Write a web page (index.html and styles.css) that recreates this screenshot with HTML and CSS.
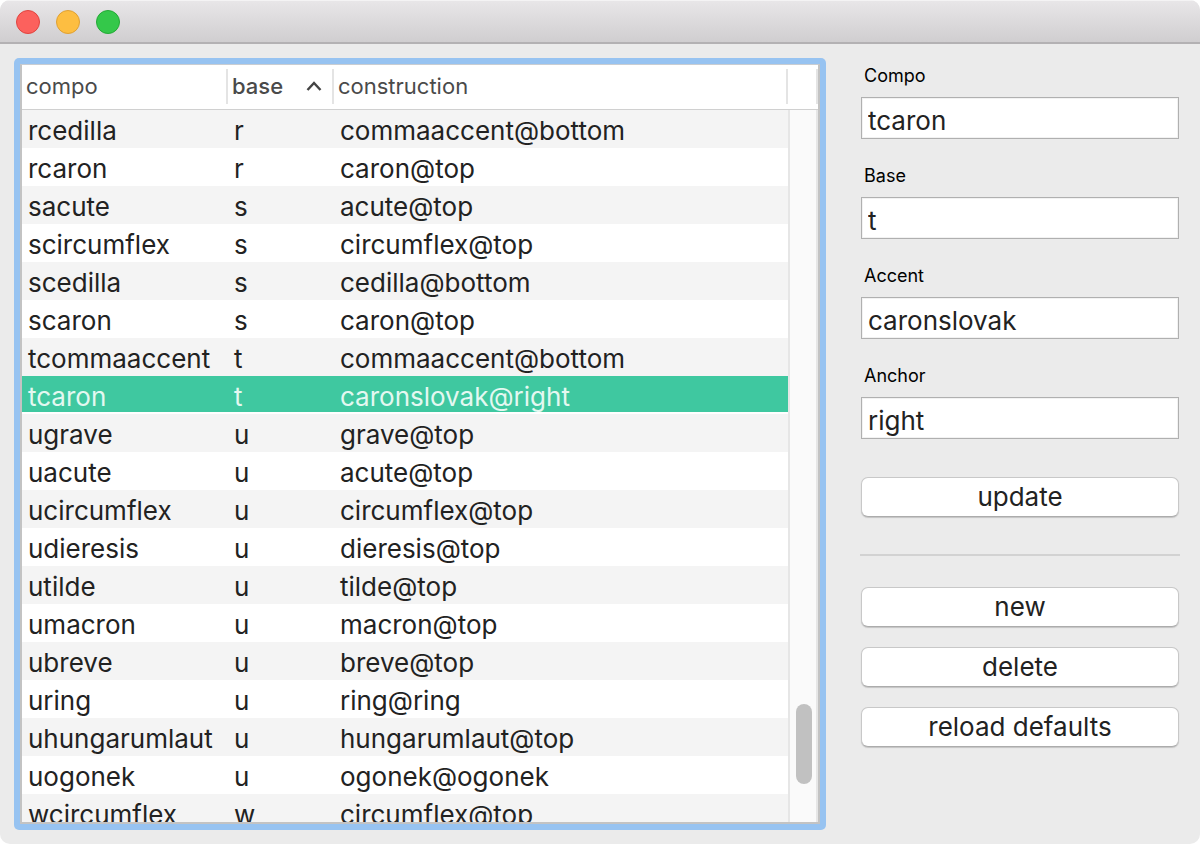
FILE: index.html
```html
<!DOCTYPE html>
<html lang="en">
<head>
<meta charset="utf-8">
<title>Glyph constructions</title>
<link rel="stylesheet" href="styles.css">
</head>
<body>
<div class="window">
  <header class="titlebar">
    <button class="light light-close" type="button" aria-label="Close"></button>
    <button class="light light-minimize" type="button" aria-label="Minimize"></button>
    <button class="light light-zoom" type="button" aria-label="Zoom"></button>
  </header>
  <main class="content">
    <section class="list">
      <div class="viewport">
      <table class="table">
        <colgroup><col class="col-compo"><col class="col-base"><col><col class="col-end"></colgroup>
        <thead>
          <tr>
            <th scope="col"><div class="head">compo</div></th>
            <th scope="col" aria-sort="ascending"><div class="head head-sorted">base
              <svg class="caret" viewBox="0 0 16 10" aria-hidden="true"><path d="M1.500 9L8 2L14.500 9"/></svg></div></th>
            <th scope="col"><div class="head">construction</div></th>
            <td><div class="head"></div></td>
          </tr>
        </thead>
        <tbody>
          <tr><td>rcedilla</td><td>r</td><td>commaaccent@bottom</td><td></td></tr>
          <tr><td>rcaron</td><td>r</td><td>caron@top</td><td></td></tr>
          <tr><td>sacute</td><td>s</td><td>acute@top</td><td></td></tr>
          <tr><td>scircumflex</td><td>s</td><td>circumflex@top</td><td></td></tr>
          <tr><td>scedilla</td><td>s</td><td>cedilla@bottom</td><td></td></tr>
          <tr><td>scaron</td><td>s</td><td>caron@top</td><td></td></tr>
          <tr><td>tcommaaccent</td><td>t</td><td>commaaccent@bottom</td><td></td></tr>
          <tr class="selected"><td>tcaron</td><td>t</td><td>caronslovak@right</td><td></td></tr>
          <tr><td>ugrave</td><td>u</td><td>grave@top</td><td></td></tr>
          <tr><td>uacute</td><td>u</td><td>acute@top</td><td></td></tr>
          <tr><td>ucircumflex</td><td>u</td><td>circumflex@top</td><td></td></tr>
          <tr><td>udieresis</td><td>u</td><td>dieresis@top</td><td></td></tr>
          <tr><td>utilde</td><td>u</td><td>tilde@top</td><td></td></tr>
          <tr><td>umacron</td><td>u</td><td>macron@top</td><td></td></tr>
          <tr><td>ubreve</td><td>u</td><td>breve@top</td><td></td></tr>
          <tr><td>uring</td><td>u</td><td>ring@ring</td><td></td></tr>
          <tr><td>uhungarumlaut</td><td>u</td><td>hungarumlaut@top</td><td></td></tr>
          <tr><td>uogonek</td><td>u</td><td>ogonek@ogonek</td><td></td></tr>
          <tr><td>wcircumflex</td><td>w</td><td>circumflex@top</td><td></td></tr>
        </tbody>
      </table>
      <div class="scrollbar"><div class="thumb"></div></div>
      </div>
    </section>
    <form class="panel">
      <label class="label" for="compo">Compo</label>
      <input class="field" id="compo" type="text" value="tcaron">
      <label class="label" for="base">Base</label>
      <input class="field" id="base" type="text" value="t">
      <label class="label" for="accent">Accent</label>
      <input class="field" id="accent" type="text" value="caronslovak">
      <label class="label" for="anchor">Anchor</label>
      <input class="field" id="anchor" type="text" value="right">
      <button class="button" type="button">update</button>
      <hr class="rule">
      <div class="actions">
        <button class="button" type="button">new</button>
        <button class="button" type="button">delete</button>
        <button class="button" type="button">reload defaults</button>
      </div>
    </form>
  </main>
</div>
</body>
</html>
```
FILE: styles.css
```css
* {
  box-sizing: border-box;
}

body {
  margin: 0;
  background: #fff;
  color: #222;
  font-family: Inter, "Liberation Sans", sans-serif;
  font-size: 26px;
}

.window {
  display: flex;
  flex-direction: column;
  height: 100vh;
  border-radius: 10px;
  overflow: hidden;
  background: #ebebeb;
}

.titlebar {
  display: flex;
  align-items: center;
  gap: 16px;
  height: 44px;
  flex: none;
  padding: 0 16px;
  background: linear-gradient(#e8e6e8, #d0ced0);
  border-top: 1px solid #f4f3f4;
  border-bottom: 2px solid #b3b1b3;
}

.light {
  width: 24px;
  height: 24px;
  padding: 0;
  border: 1px solid;
  border-radius: 50%;
}

.light-close {
  background: #fc615d;
  border-color: #e0443f;
}

.light-minimize {
  background: #fdbe41;
  border-color: #dfa033;
}

.light-zoom {
  background: #34c84a;
  border-color: #24a936;
}

.content {
  display: flex;
  flex: 1;
  min-height: 0;
  gap: 34px;
  padding: 14px 20px 14px 14px;
}

/* Focus ring around the list */
.list {
  display: flex;
  flex: 1;
  min-width: 0;
  padding: 6px;
  border-radius: 5px;
  background: #97c3f1;
}

.viewport {
  position: relative;
  flex: 1;
  min-width: 0;
  overflow: hidden;
  background: #fff;
  border: 2px solid #c3c3c3;
  border-top: 1px solid #c9cdd2;
}

.table {
  width: 100%;
  table-layout: fixed;
  border-collapse: separate;
  border-spacing: 0;
}

.col-compo {
  width: 206px;
}

.col-base {
  width: 106px;
}

.col-end {
  width: 30px;
}

.table th,
.table thead td {
  height: 45px;
  padding: 4px 0 5px;
  border-bottom: 1px solid #d0d0d0;
  background: #fff;
  text-align: left;
  font-weight: 400;
}

.head {
  display: flex;
  align-items: center;
  justify-content: space-between;
  height: 35px;
  padding: 0 10px 2px 4px;
  border-right: 2px solid #e4e4e4;
  color: #4a4a4a;
  font-size: 22px;
}

.head-sorted {
  font-weight: 500;
}

.caret {
  width: 16px;
  height: 10px;
  fill: none;
  stroke: #444;
  stroke-width: 2.4;
}

.table tbody td {
  height: 38px;
  padding: 4px 0 0 6px;
  line-height: 34px;
  white-space: nowrap;
}

.table tbody tr:nth-child(odd) {
  background: #f4f4f4;
}

.table tbody .selected {
  background: #3fc8a0;
  color: #e4f8f1;
}

.table tbody .selected td {
  padding-top: 4px;
  line-height: 32px;
  padding-top: 4px;
  box-shadow: inset 0 -2px #fff;
  line-height: 34px;
}

.scrollbar {
  position: absolute;
  top: 45px;
  right: 0;
  bottom: 0;
  width: 30px;
  padding: 0 4px 38px 6px;
  display: flex;
  align-items: flex-end;
  background: #fafafa;
  border: solid #e6e6e6;
  border-width: 0 2px;
}

.thumb {
  width: 16px;
  height: 80px;
  border-radius: 8px;
  background: #c1c1c1;
}

.panel {
  display: flex;
  flex-direction: column;
  width: 320px;
  flex: none;
  padding: 5px 1px 0;
}

.label {
  margin-left: 3px;
  color: #000;
  font-size: 18px;
  line-height: 26px;
}

.field {
  height: 42px;
  margin: 8px 0 24px;
  padding: 5px 6px 0;
  border: 1px solid #b0b0b0;
  border-radius: 0;
  outline: 0;
  background: #fff;
  box-shadow: inset 0 0 0 1px #f2f2f2;
  color: inherit;
  font: inherit;
}

.button {
  height: 40px;
  padding: 0 0 2px;
  border: 1px solid #c8c8c8;
  border-bottom-color: #acacac;
  border-radius: 7px;
  background: #fff;
  box-shadow: 0 1px 1px #c4c4c4;
  color: inherit;
  font: inherit;
}

.field + .button {
  margin-top: 14px;
}

.rule {
  align-self: stretch;
  height: 2px;
  margin: 37px -1px 31px;
  border: 0;
  background: #d2d2d2;
}

.actions {
  display: grid;
  gap: 20px;
}
```
